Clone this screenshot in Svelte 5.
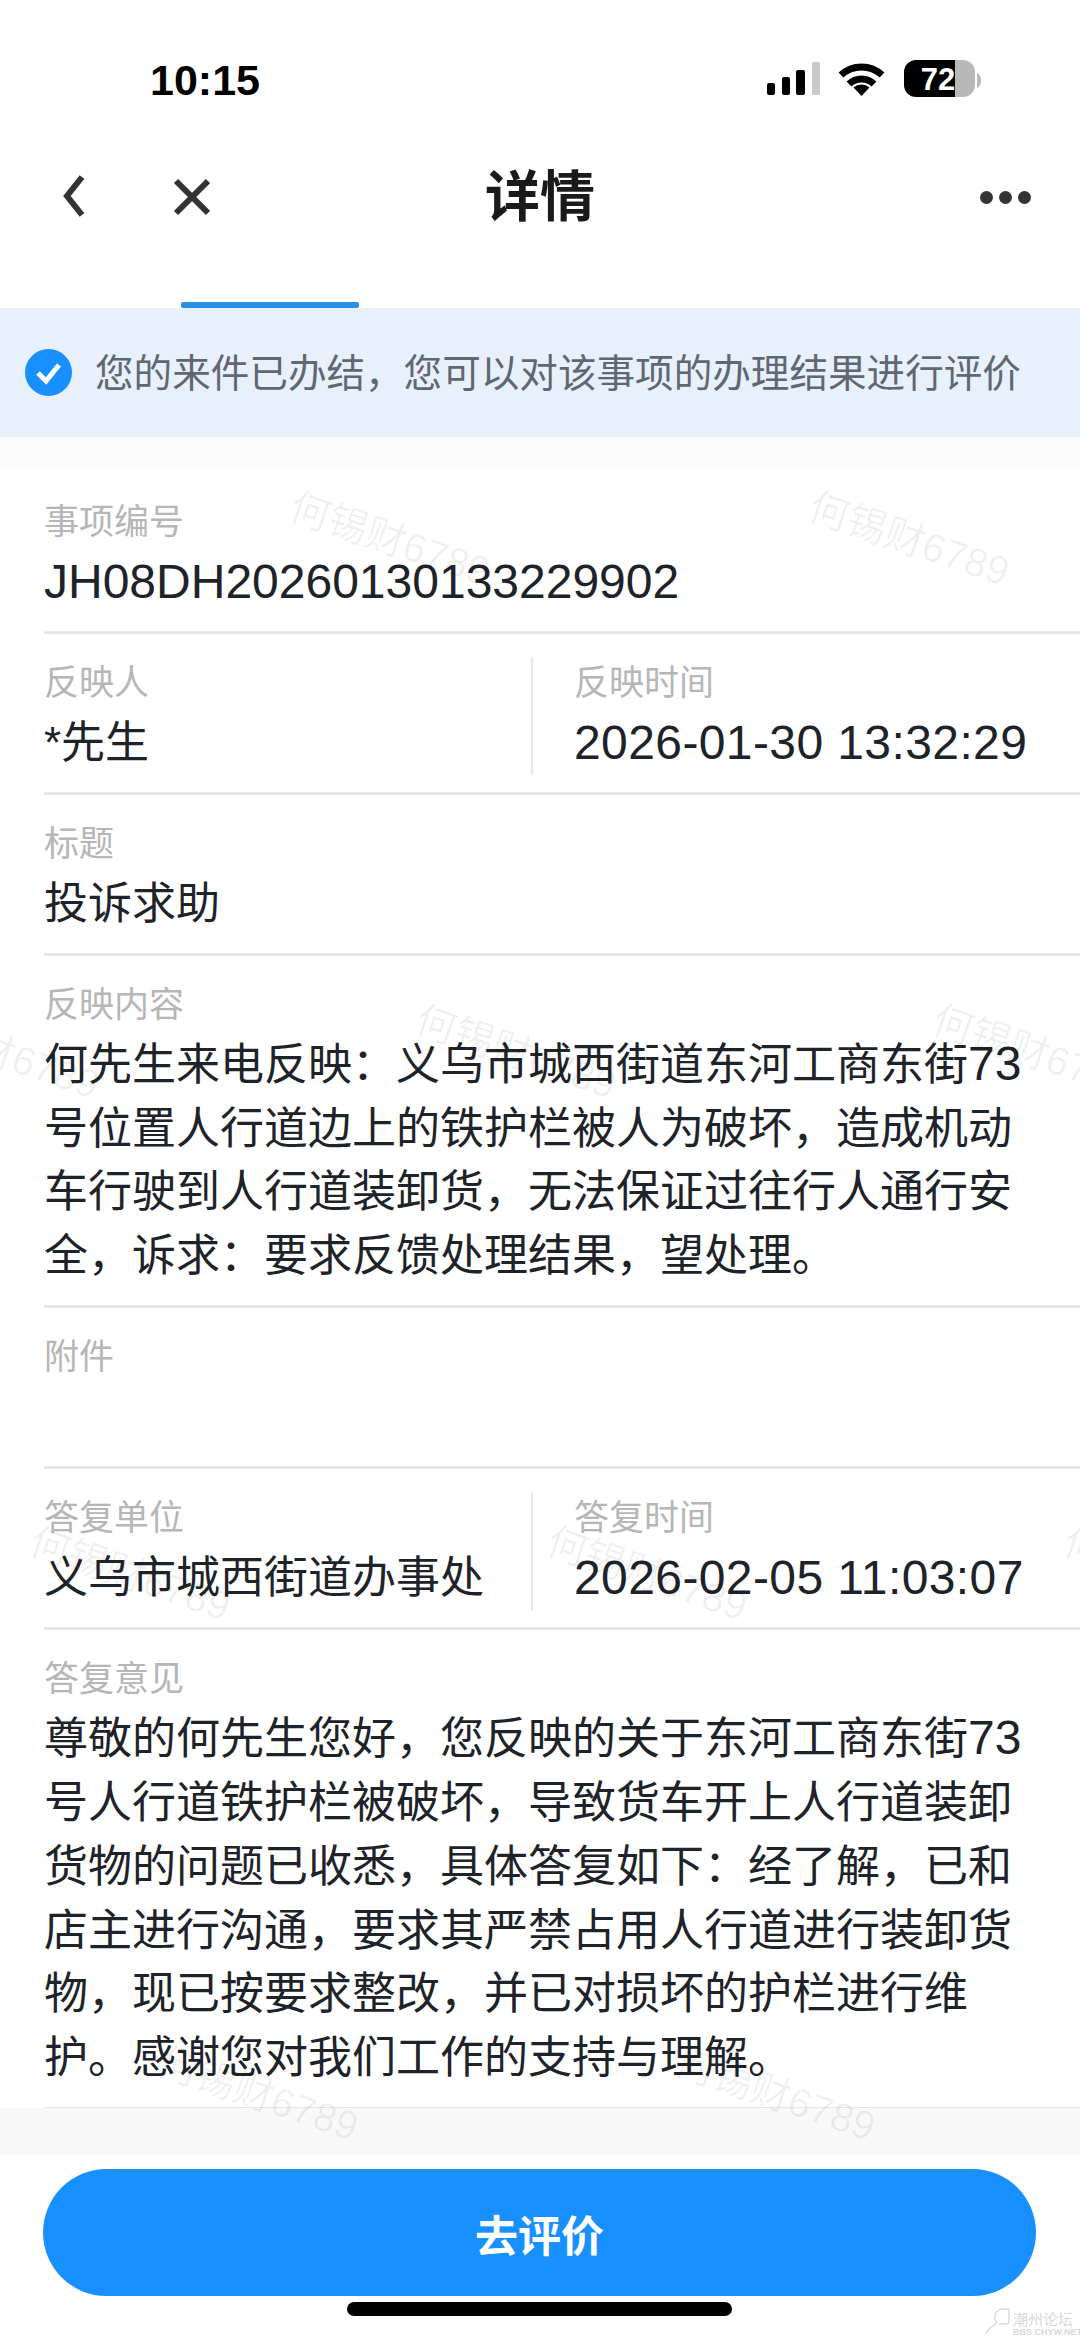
<script>
  const watermarks = [
    [390, 539], [909, 539],
    [-1, 1052], [516, 1052], [1033, 1052],
    [130, 1574], [647, 1574], [1164, 1574],
    [258, 2094], [775, 2094],
  ];
</script>

<div class="page">
  <div class="status">
    <span class="time">10:15</span>
    <svg class="status-icons" width="214" height="40" viewBox="767 59 214 40">
      <rect x="767" y="83" width="8" height="12" rx="2" />
      <rect x="782" y="77" width="8" height="18" rx="2" />
      <rect x="796" y="70" width="9" height="25" rx="2" />
      <rect x="812" y="62" width="8" height="33" rx="2" fill="#c9c9c9" />
      <path d="M841 75a30 30 0 0 1 41 0" fill="none" stroke="#000" stroke-width="7" />
      <path d="M849 84a18 18 0 0 1 25 0" fill="none" stroke="#000" stroke-width="7" />
      <path d="M861.500 96l-8-8.500a12 12 0 0 1 16 0z" />
      <path d="M955 60h8a12 12 0 0 1 12 12v13a12 12 0 0 1-12 12h-8z" fill="#b8b8b8" />
      <path d="M955 60h-39a12 12 0 0 0-12 12v13a12 12 0 0 0 12 12h39z" />
      <path d="M977 73c2.500 1 4 4 4 7.500s-1.500 6.500-4 7.500z" fill="#b8b8b8" />
      <text x="938" y="90" class="battery">72</text>
    </svg>
  </div>

  <div class="nav">
    <div class="nav-left">
      <svg class="back" width="24" height="44" viewBox="0 0 24 44">
        <path d="M20 2 5 21l15 19" />
      </svg>
      <svg class="close" width="38" height="38" viewBox="0 0 38 38">
        <path d="M4 3l32 32M36 3 4 35" />
      </svg>
    </div>
    <div class="title">详情</div>
    <div class="dots"><i></i><i></i><i></i></div>
  </div>

  <div class="tabs"><div class="tab-line"></div></div>

  <div class="banner">
    <svg width="47" height="47" viewBox="0 0 47 47">
      <circle cx="23.500" cy="23.500" r="23.500" fill="#1890ff" />
      <path d="M13 24l8 8 13-16" fill="none" stroke="#fff" stroke-width="5" />
    </svg>
    <span>您的来件已办结，您可以对该事项的办理结果进行评价</span>
  </div>
  <div class="fade"></div>

  <div class="list">
    <section class="row">
      <div class="label">事项编号</div>
      <div class="value num">JH08DH20260130133229902</div>
    </section>

    <section class="row split">
      <div class="col">
        <div class="label">反映人</div>
        <div class="value">*先生</div>
      </div>
      <div class="col right">
        <div class="label">反映时间</div>
        <div class="value num date">2026-01-30 13:32:29</div>
      </div>
    </section>

    <section class="row">
      <div class="label">标题</div>
      <div class="value">投诉求助</div>
    </section>

    <section class="row">
      <div class="label">反映内容</div>
      <div class="value">何先生来电反映：义乌市城西街道东河工商东街<span class="digits">73</span>号位置人行道边上的铁护栏被人为破坏，造成机动车行驶到人行道装卸货，无法保证过往行人通行安全，诉求：要求反馈处理结果，望处理。</div>
    </section>

    <section class="row">
      <div class="label">附件</div>
      <div class="value empty"></div>
    </section>

    <section class="row split">
      <div class="col">
        <div class="label">答复单位</div>
        <div class="value">义乌市城西街道办事处</div>
      </div>
      <div class="col right">
        <div class="label">答复时间</div>
        <div class="value num date">2026-02-05 11:03:07</div>
      </div>
    </section>

    <section class="row">
      <div class="label">答复意见</div>
      <div class="value">尊敬的何先生您好，您反映的关于东河工商东街<span class="digits">73</span>号人行道铁护栏被破坏，导致货车开上人行道装卸货物的问题已收悉，具体答复如下：经了解，已和店主进行沟通，要求其严禁占用人行道进行装卸货物，现已按要求整改，并已对损坏的护栏进行维护。感谢您对我们工作的支持与理解。</div>
    </section>
  </div>

  <div class="list-end"></div>

  <div class="footer">
    <button class="action">去评价</button>
    <div class="home"></div>
  </div>

  {#each watermarks as [x, y]}
    <span class="mark" style="left: {x}px; top: {y}px">何锡财6789</span>
  {/each}

  <div class="forum">
    <svg width="26" height="26" viewBox="0 0 26 26">
      <path d="M1 25c4-6 8-8 11-10-2-2-3-5-2-8 1-4 5-6 9-6h5v14c-3 1-7 1-10 1" />
    </svg>
    <div class="forum-text">
      <span>潮州论坛</span>
      <span class="forum-url">BBS.CHYW.NET</span>
    </div>
  </div>
</div>

<style>
  :global(body) {
    background: #fff;
  }

  .page {
    position: relative;
    width: 1080px;
    height: 2339px;
    overflow: hidden;
    display: flex;
    flex-direction: column;
    background: #fff;
    font-family: "Liberation Sans", "Noto Sans CJK SC", sans-serif;
    color: #1e2229;
  }

  .status {
    height: 130px;
    box-sizing: border-box;
    padding: 59px 99px 0 150px;
    display: flex;
    justify-content: space-between;
    align-items: flex-start;
  }
  .time {
    font-size: 43px;
    line-height: 42px;
    font-weight: 700;
    color: #000;
  }
  .status-icons {
    display: block;
  }
  .battery {
    font-family: "Liberation Sans", sans-serif;
    font-size: 31px;
    font-weight: 700;
    fill: #fff;
    text-anchor: middle;
  }

  .nav {
    height: 134px;
    display: grid;
    grid-template-columns: 1fr auto 1fr;
    align-items: center;
    padding: 0 49px;
  }
  .nav-left {
    display: flex;
    align-items: center;
    gap: 86px;
    padding-left: 13px;
  }
  .back path,
  .close path {
    fill: none;
    stroke: #333;
    stroke-width: 6;
  }
  .title {
    font-size: 55px;
    font-weight: 700;
    line-height: 60px;
    color: #1a1a1a;
  }
  .dots {
    display: flex;
    justify-content: flex-end;
    gap: 6px;
  }
  .dots i {
    width: 13px;
    height: 13px;
    border-radius: 50%;
    background: #333;
  }

  .tabs {
    height: 44px;
    display: flex;
    align-items: flex-end;
    padding-left: 181px;
  }
  .tab-line {
    width: 178px;
    height: 6px;
    border-radius: 2px;
    background: #2a8fe8;
  }

  .banner {
    height: 129px;
    flex: none;
    display: flex;
    align-items: center;
    gap: 23px;
    padding-left: 25px;
    background: #e8f0fb;
    font-size: 38.600px;
    color: #5f6773;
  }
  .banner span {
    margin-top: -5px;
  }
  .fade {
    height: 34px;
    flex: none;
    background: linear-gradient(#f8f9f9, #fcfcfc 80%, #fff);
  }

  .list {
    padding-left: 44px;
  }
  .row {
    padding: 29px 46px 17.300px 0;
    border-bottom: 3px solid #e6e6e6;
    margin-bottom: -2px;
  }
  .label {
    font-size: 35px;
    line-height: 44px;
    margin-bottom: 6px;
    color: #b6b6b6;
  }
  .value {
    font-size: 44px;
    line-height: 63.700px;
  }
  .value.num {
    font-size: 48px;
  }
  .value.date {
    letter-spacing: 0.400px;
  }
  .digits {
    font-size: 48px;
    line-height: 1;
  }
  .value.empty {
    height: 64px;
  }
  .split {
    display: flex;
  }
  .col {
    width: 487px;
    flex: none;
  }
  .col.right {
    width: auto;
    flex: 1;
    margin-top: -4px;
    padding-top: 4px;
    padding-left: 41px;
    border-left: 2px solid #e9e9e9;
    white-space: nowrap;
  }

  .list-end {
    flex: 1;
    background: #f9f9f9;
  }

  .footer {
    height: 184px;
    flex: none;
    box-sizing: border-box;
    padding: 14px 44px 0 43px;
    background: #fff;
    display: flex;
    flex-direction: column;
    align-items: center;
  }
  .action {
    width: 100%;
    height: 127px;
    border: 0;
    border-radius: 64px;
    background: #1890ff;
    color: #fff;
    font-family: inherit;
    font-size: 43px;
    font-weight: 700;
  }
  .home {
    width: 385px;
    height: 14px;
    margin-top: 6px;
    border-radius: 7px;
    background: #000;
  }

  .mark {
    position: absolute;
    transform: translate(-50%, -50%) rotate(19deg);
    font-size: 40px;
    line-height: 44px;
    white-space: nowrap;
    color: rgba(0, 0, 0, 0.06);
    pointer-events: none;
  }

  .forum {
    position: absolute;
    left: 985px;
    top: 2308px;
    display: flex;
    align-items: flex-start;
    gap: 2px;
    color: #d8d8d8;
    white-space: nowrap;
  }
  .forum svg path {
    fill: none;
    stroke: #dcdcdc;
    stroke-width: 1.500;
  }
  .forum-text {
    display: flex;
    flex-direction: column;
    padding-top: 4px;
    font-size: 15px;
    line-height: 15px;
  }
  .forum-url {
    font-size: 9px;
    line-height: 10px;
    font-weight: 700;
  }
</style>
